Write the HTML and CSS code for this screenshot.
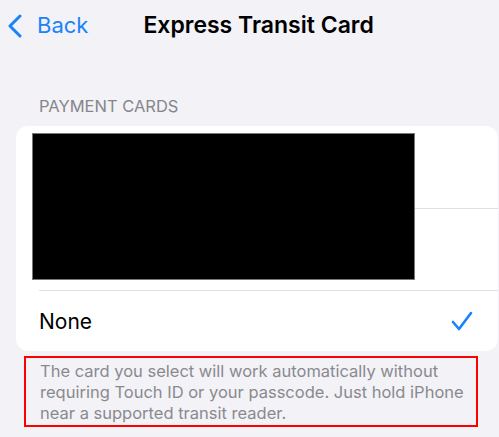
FILE: index.html
```html
<!DOCTYPE html>
<html>
<head>
<meta charset="utf-8">
<link rel="stylesheet" href="styles.css">
</head>
<body>
<div class="nav">
  <div class="back">
    <svg class="chev" width="18" height="24" viewBox="0 0 18 24"><path d="M14 2 L4 12 L14 22" fill="none" stroke="#1a82fb" stroke-width="3" stroke-linecap="round" stroke-linejoin="round"/></svg>
    <span class="back-label">Back</span>
  </div>
  <div class="title">Express Transit Card</div>
</div>
<div class="section-head">PAYMENT CARDS</div>
<div class="card">
  <div class="row row-tall"></div>
  <div class="row row-tall sep"></div>
  <div class="row row-none sep">
    <span class="none">None</span>
    <svg class="check" width="22" height="20" viewBox="0 0 22 20"><path d="M2 11 L8 18 L20 2" fill="none" stroke="#1a82fb" stroke-width="2.6" stroke-linecap="round" stroke-linejoin="round"/></svg>
  </div>
  <div class="redact"></div>
</div>
<div class="footnote">The card you select will work automatically without requiring Touch ID or your passcode. Just hold iPhone near a supported transit reader.</div>
</body>
</html>
```
FILE: styles.css
```css
html, body {
  margin: 0;
  padding: 0;
  background: #f2f2f7;
  font-family: "Inter", "Liberation Sans", sans-serif;
}
.nav {
  height: 50px;
  display: flex;
  align-items: center;
}
.back {
  display: flex;
  align-items: center;
  padding-left: 6px;
  color: #1a82fb;
}
.chev {
  display: block;
  margin-top: 2px;
}
.back-label {
  font-size: 22px;
  margin-left: 13px;
}
.title {
  margin-left: 55px;
  font-size: 23px;
  font-weight: 600;
  color: #000;
}
.section-head {
  margin-top: 47px;
  padding-left: 39px;
  font-size: 16.5px;
  color: #86868b;
  line-height: 18px;
}
.card {
  position: relative;
  margin: 11px 1px 0 16px;
  background: #fff;
  border-radius: 12px;
  overflow: hidden;
}
.row {
  display: flex;
  align-items: center;
  justify-content: space-between;
}
.row-tall {
  height: 82px;
}
.row-tall.sep {
  border-top: 1px solid #e0e0e3;
  margin-left: 23px;
  height: 81px;
}
.row-none {
  border-top: 1px solid #e0e0e3;
  margin-left: 23px;
  padding-right: 25px;
  height: 60px;
}
.none {
  font-size: 21px;
  color: #000;
}
.check {
  display: block;
}
.redact {
  position: absolute;
  left: 16px;
  top: 7px;
  width: 383px;
  height: 147px;
  background: #000;
  border: 1px solid #777;
  box-sizing: border-box;
}
.footnote {
  margin: 5px 21px 0 24px;
  border: 2px solid #ff0000;
  padding: 3px 8px 1px 14px;
  font-size: 16.5px;
  line-height: 21px;
  color: #8a8a8e;
}
```
